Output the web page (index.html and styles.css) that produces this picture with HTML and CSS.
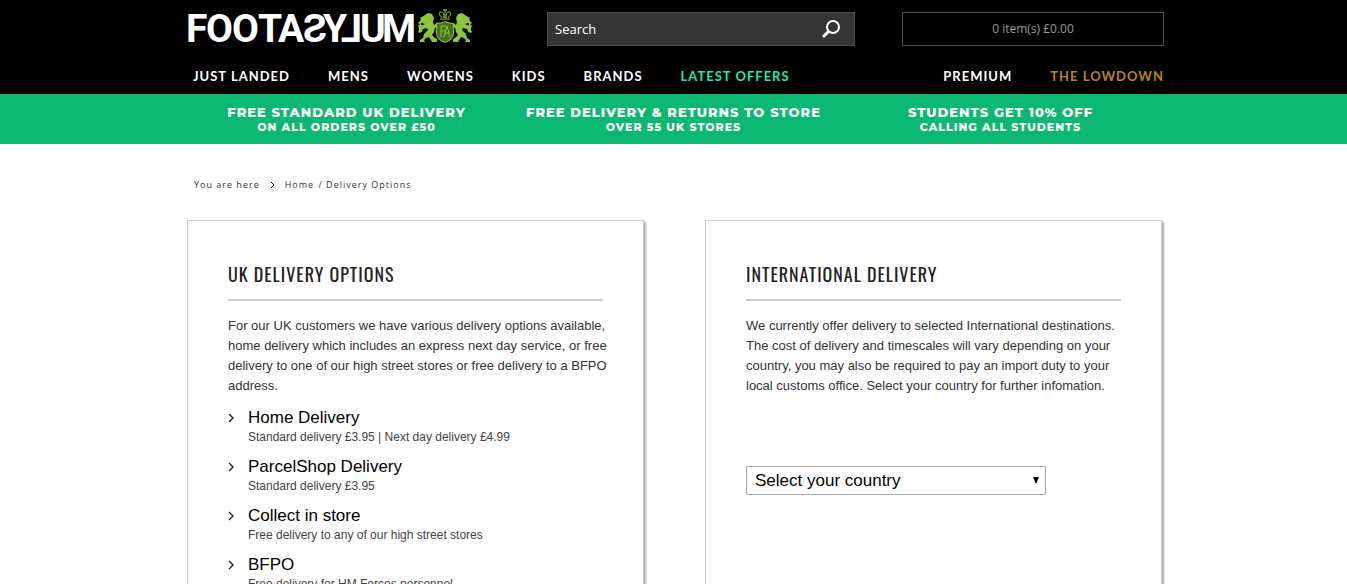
FILE: index.html
```html
<!DOCTYPE html>
<html lang="en">
<head>
    <meta charset="UTF-8">
    <meta name="viewport" content="width=device-width, initial-scale=1.0">
    <title>Delivery Options | Footasylum</title>
    <link rel="stylesheet" href="styles.css">
</head>
<body>
    <header class="header">
        <div class="wrapper">
            <div class="header-top">
                <a href="#" class="logo" aria-label="Footasylum">
                    <svg width="286" height="38" viewBox="0 0 286 38">
                        <!-- Wordmark, the S and L are flipped -->
                        <g class="wordmark">
                            <text x="-1 19 45 71 91" y="34">FOOTA</text>
                            <text transform="translate(140 34) scale(-1 1)">S</text>
                            <text x="136" y="34">Y</text>
                            <text transform="translate(175 34) scale(-1 1)">L</text>
                            <text x="173 195" y="34">UM</text>
                        </g>
                        <!-- Crest -->
                        <g transform="translate(1 2)">
                            <g fill="#8cc63f">
                                <path id="lion" d="M237 5l3-2 4 1 2 4-1 4 1 3 3-2 1 2-3 3-1 4-2 3 3 3 2 1v3h-5l-3-5-3 1-2 2 1 2h-5v-2l3-2 1-4 4-4-1-2-4 1-1 3-3 1-1-2 2-1 1-4 4-2-3-1-3 1-1-1 3-3-1-2zM232 10l2 1-1 3 1 2-1 3-2 2v-3l-1-2 2-2z"/>
                                <use href="#lion" transform="translate(514 0) scale(-1 1)"/>
                                <path d="M248 13q5 0 9-2 4 2 9 2v10q0 7-9 10-9-3-9-10z"/>
                            </g>
                            <path d="M254 8q-5-6-1-6 3 0 3 6M260 8q5-6 1-6-3 0-3 6M257-1v9M255 0h4M252 9h10" fill="none" stroke="#8cc63f"/>
                            <path d="M249 14q4 0 8-2 4 2 8 2v9q0 6-8 9-8-3-8-9z" fill="#45701f"/>
                            <path d="M253 27V16h5M253 21h4M256 27l3-11 3 11M257 23h4" fill="none" stroke="#8cc63f"/>
                        </g>
                    </svg>
                </a>
                <form class="search" action="#">
                    <input type="text" placeholder="Search" aria-label="Search">
                    <button type="submit" aria-label="Search">
                        <svg width="18" height="18" viewBox="0 0 18 18" fill="none" stroke="#fff">
                            <circle cx="11" cy="7" r="6" stroke-width="2"/>
                            <path d="M6 12l-4 4" stroke-width="3" stroke-linecap="round"/>
                        </svg>
                    </button>
                </form>
                <a href="#" class="basket">0 item(s) £0.00</a>
            </div>
            <nav class="nav">
                <a href="#">JUST LANDED</a>
                <a href="#">MENS</a>
                <a href="#">WOMENS</a>
                <a href="#">KIDS</a>
                <a href="#">BRANDS</a>
                <a href="#" class="offers">LATEST OFFERS</a>
                <a href="#" class="premium">PREMIUM</a>
                <a href="#" class="lowdown">THE LOWDOWN</a>
            </nav>
        </div>
    </header>

    <div class="promo">
        <div class="promo-inner">
            <a href="#" class="promo-item"><strong>FREE STANDARD UK DELIVERY</strong><span>ON ALL ORDERS OVER £50</span></a>
            <a href="#" class="promo-item"><strong>FREE DELIVERY &amp; RETURNS TO STORE</strong><span>OVER 55 UK STORES</span></a>
            <a href="#" class="promo-item"><strong>STUDENTS GET 10% OFF</strong><span>CALLING ALL STUDENTS</span></a>
        </div>
    </div>

    <main class="wrapper">
        <div class="breadcrumb">
            <span>You are here</span>
            <svg width="5" height="6" viewBox="0 0 5 6" fill="none" stroke="#000"><path d="M1 0l3 3-3 3"/></svg>
            <span><a href="#">Home</a> / <a href="#">Delivery Options</a></span>
        </div>

        <div class="cards">
            <section class="card">
                <h2>UK DELIVERY OPTIONS</h2>
                <p>For our UK customers we have various delivery options available, home delivery which includes an express next day service, or free delivery to one of our high street stores or free delivery to a BFPO address.</p>
                <ul class="options">
                    <li>
                        <svg class="arrow" width="6" height="10" viewBox="0 0 6 10"><path d="M1 1l4 4-4 4"/></svg>
                        <a href="#">Home Delivery</a>
                        <span>Standard delivery £3.95 | Next day delivery £4.99</span>
                    </li>
                    <li>
                        <svg class="arrow" width="6" height="10" viewBox="0 0 6 10"><path d="M1 1l4 4-4 4"/></svg>
                        <a href="#">ParcelShop Delivery</a>
                        <span>Standard delivery £3.95</span>
                    </li>
                    <li>
                        <svg class="arrow" width="6" height="10" viewBox="0 0 6 10"><path d="M1 1l4 4-4 4"/></svg>
                        <a href="#">Collect in store</a>
                        <span>Free delivery to any of our high street stores</span>
                    </li>
                    <li>
                        <svg class="arrow" width="6" height="10" viewBox="0 0 6 10"><path d="M1 1l4 4-4 4"/></svg>
                        <a href="#">BFPO</a>
                        <span>Free delivery for HM Forces personnel</span>
                    </li>
                </ul>
            </section>

            <section class="card">
                <h2>INTERNATIONAL DELIVERY</h2>
                <p>We currently offer delivery to selected International destinations. The cost of delivery and timescales will vary depending on your country, you may also be required to pay an import duty to your local customs office. Select your country for further infomation.</p>
                <div class="country">
                    <select aria-label="Select your country">
                        <option>Select your country</option>
                    </select>
                    <svg width="6" height="7" viewBox="0 0 6 7"><path d="M0 0h6L3 7z"/></svg>
                </div>
            </section>
        </div>
    </main>
</body>
</html>
```
FILE: styles.css
```css
* {
    box-sizing: border-box;
}

body {
    margin: 0;
    background: #fff;
    color: #333;
    font-family: "Liberation Sans", Arial, sans-serif;
    font-size: 12px;
}

a {
    color: inherit;
    text-decoration: none;
}

.wrapper {
    max-width: 981px;
    margin: 0 auto;
    padding-left: 4px;
}

.header {
    background: #000;
}

.header-top {
    display: flex;
    align-items: flex-end;
    padding-top: 8px;
}

.logo {
    margin-right: auto;
}

.logo svg {
    display: block;
    overflow: visible;
}

.wordmark {
    fill: #fff;
    font-family: Roboto, sans-serif;
    font-size: 39px;
    font-weight: bold;
}

.search {
    display: flex;
    align-items: center;
    width: 308px;
    height: 34px;
    margin-right: 47px;
    padding-right: 14px;
    background: #353535;
    border: 1px solid #4d4d4d;
}

.search input {
    flex: 1;
    min-width: 0;
    padding: 0 7px;
    background: none;
    border: 0;
    color: #fff;
    font-family: "Open Sans", sans-serif;
    font-size: 13px;
}

.search input::placeholder {
    color: #fff;
    opacity: 1;
}

.search button {
    display: flex;
    padding: 0;
    background: none;
    border: 0;
    cursor: pointer;
}

.basket {
    width: 262px;
    border: 1px solid #4d4d4d;
    color: #999;
    font-family: "Open Sans", sans-serif;
    font-size: 12px;
    line-height: 32px;
    text-align: center;
}

.nav {
    display: flex;
    gap: 38px;
    padding: 16px 0 4px 6px;
    color: #fff;
    font-family: Lato, sans-serif;
    font-size: 13px;
    font-weight: bold;
    letter-spacing: 1px;
    line-height: 28px;
}

.nav .offers {
    color: #1de9a0;
}

.nav .premium {
    margin-left: auto;
}

.nav .lowdown {
    color: #b8861f;
}

.promo {
    background: #0bb871;
    color: #fff;
    font-family: Montserrat, Inter, sans-serif;
    font-weight: 800;
}

.promo-inner {
    display: flex;
    max-width: 981px;
    margin: 0 auto;
    padding: 10px 0;
}

.promo-item {
    flex: 1;
    font-size: 11px;
    letter-spacing: 1px;
    line-height: 14px;
    text-align: center;
}

.promo-item strong {
    display: block;
    font-size: 13px;
    font-weight: 800;
    line-height: 16px;
}

.breadcrumb {
    display: flex;
    align-items: center;
    gap: 10px;
    padding: 30px 0 25px 7px;
    font-family: "Open Sans", sans-serif;
    font-size: 9px;
    letter-spacing: 1px;
    line-height: 21px;
}

.breadcrumb a {
    margin-right: 1px;
}

.cards {
    display: flex;
    gap: 61px;
    padding-right: 2px;
}

.card {
    flex: 1;
    padding: 40px;
    border: 1px solid #ccc;
    box-shadow: 2px 2px 2px #aaa;
}

.card h2 {
    margin: 0 0 15px;
    padding-bottom: 12px;
    border-bottom: 2px solid #ccc;
    color: #222;
    font-family: Oswald, "Open Sans", sans-serif;
    font-size: 18px;
    font-weight: 400;
    letter-spacing: 1px;
    line-height: 26px;
}

.card p {
    margin: 0 -10px 0 0;
    font-size: 13px;
    line-height: 20px;
}

.options {
    margin: 12px 0 0;
    padding: 0;
    list-style: none;
}

.options li {
    display: grid;
    grid-template-columns: 20px 1fr;
    align-items: center;
    margin-bottom: 11px;
}

.options a {
    color: #000;
    font-size: 17px;
    line-height: 20px;
}

.options span {
    grid-column: 2;
    color: #444;
    line-height: 18px;
}

.arrow {
    fill: none;
    stroke: #222;
    stroke-width: 1.4;
}

.country {
    display: flex;
    align-items: center;
    position: relative;
    max-width: 300px;
    margin-top: 70px;
}

.country select {
    width: 100%;
    height: 29px;
    padding: 0 8px;
    appearance: none;
    background: #fff;
    border: 1px solid #a9a9a9;
    border-radius: 1px;
    color: #000;
    font-family: "Liberation Sans", Arial, sans-serif;
    font-size: 17px;
}

/* Arrow sits over the select */
.country svg {
    position: absolute;
    right: 7px;
    pointer-events: none;
}
```
